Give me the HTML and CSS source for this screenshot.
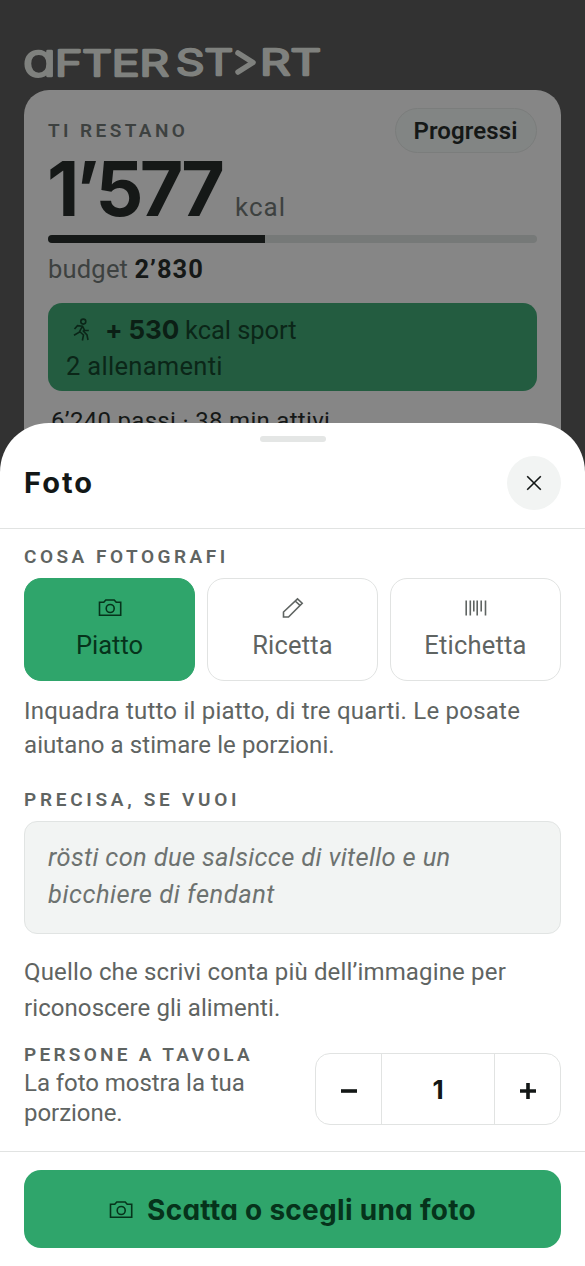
FILE: index.html
```html
<!DOCTYPE html>
<html lang="it">
<head>
<meta charset="utf-8">
<meta name="viewport" content="width=device-width">
<title>After Start</title>
<link rel="stylesheet" href="styles.css">
</head>
<body>
<svg width="0" height="0" class="defs">
  <symbol id="camera" viewBox="0 0 24 18"><path d="M1.5 3.2H5.8L7.8 1H16.2L18.2 3.2H22.7V16.2H1.5Z"/><circle cx="12.2" cy="9.5" r="4"/></symbol>
</svg>
<main class="app">
  <svg class="logo" width="300" height="38" viewBox="0 0 300 38" role="img" aria-label="After Start">
    <text class="logo-a" x="-1" y="31" textLength="33" lengthAdjust="spacingAndGlyphs">a</text>
    <text x="31" y="31" textLength="114" lengthAdjust="spacingAndGlyphs">FTER</text>
    <text x="152" y="30" textLength="57" lengthAdjust="spacingAndGlyphs">ST</text>
    <path d="M214 8L229 17.5L214 27"/>
    <text x="236" y="30" textLength="61" lengthAdjust="spacingAndGlyphs">RT</text>
  </svg>
  <section class="card">
    <div class="card-top">
      <div class="label dim">TI RESTANO</div>
      <button class="pill">Progressi</button>
    </div>
    <div class="total"><strong>1’577</strong><span>kcal</span></div>
    <div class="track"><div class="fill"></div></div>
    <div class="budget"><span>budget</span> <b>2’830</b></div>
    <div class="sport">
      <div class="sport-line">
        <svg width="20" height="24" viewBox="0 0 20 24"><circle cx="11.3" cy="3.6" r="2.5"/><path d="M2.5 11L5.5 7.7L10.5 8.3L12.5 12.2L16.8 12.5M10.2 8.5L7.3 14.1L2 17.3M7.6 13.5L11.5 17L10.4 22.5M10.8 12.5L15 17L16 22"/></svg>
        <b>+ 530</b><span>kcal sport</span>
      </div>
      <div class="workouts">2 allenamenti</div>
    </div>
    <div class="steps">6’240 passi · 38 min attivi</div>
  </section>
</main>
<section class="sheet">
  <header>
    <div class="grip"></div>
    <div class="head-row">
      <h1>Foto</h1>
      <button class="close" aria-label="Chiudi"><svg width="16" height="16" viewBox="0 0 16 16"><path d="M1.2 1.2L14.8 14.8M14.8 1.2L1.2 14.8"/></svg></button>
    </div>
  </header>
  <div class="body">
    <div class="label">COSA FOTOGRAFI</div>
    <div class="modes">
      <button class="mode active"><svg width="24" height="18"><use href="#camera"/></svg><span>Piatto</span></button>
      <button class="mode"><svg width="22" height="22" viewBox="0 0 22 22"><path d="M1.5 20V15L15.5 1.8L20.2 6.2L6.5 20ZM13.2 4L18 8.4"/></svg><span>Ricetta</span></button>
      <button class="mode"><svg width="22" height="18" viewBox="0 0 22 18"><path d="M1.2 1.5V16.5M5.3 1.5V16.5M8.8 1.5V12.5M12.2 1.5V16.5M16.2 1.5V12.5M20.5 1.5V16.5"/></svg><span>Etichetta</span></button>
    </div>
    <p class="hint">Inquadra tutto il piatto, di tre quarti. Le posate<br><span>aiutano a stimare le porzioni.</span></p>
    <div class="label second">PRECISA, SE VUOI</div>
    <div class="note">rösti con due salsicce di vitello e un<br><span>bicchiere di fendant</span></div>
    <p class="hint help">Quello che scrivi conta più dell’immagine per<br><span>riconoscere gli alimenti.</span></p>
    <div class="people">
      <div>
        <div class="label persons">PERSONE A TAVOLA</div>
        <p>La foto mostra la tua<br><span>porzione.</span></p>
      </div>
      <div class="stepper">
        <button aria-label="Meno"><svg width="18" height="18" viewBox="0 0 18 18"><path d="M1 9H17"/></svg></button>
        <output>1</output>
        <button aria-label="Più"><svg width="18" height="18" viewBox="0 0 18 18"><path d="M1 9H17M9 1V17"/></svg></button>
      </div>
    </div>
  </div>
  <footer><button class="cta"><svg width="24" height="18"><use href="#camera"/></svg><span>Scatta o scegli una foto</span></button></footer>
</section>
</body>
</html>
```
FILE: styles.css
```css
* { box-sizing: border-box; }
body { margin: 0; width: 585px; height: 1266px; overflow: hidden; position: relative; background: #323232; font-family: Roboto, "Liberation Sans", sans-serif; color: #131716; }
button { font: inherit; color: inherit; margin: 0; padding: 0; border: 0; background: none; }
p, h1 { margin: 0; font-weight: 400; }
svg { display: block; flex: none; fill: none; stroke: currentColor; stroke-width: 1.6; }
.defs { position: absolute; }
.app { padding: 45px 24px 0; }
.logo { stroke: #7f817e; stroke-width: 5.5; stroke-linecap: round; stroke-linejoin: round; overflow: visible; }
.logo text { font: 300 35px Inter, sans-serif; fill: #7f817e; stroke-width: 2.6; }
.logo .logo-a { font-size: 46px; font-feature-settings: "cv11"; }
.card { margin-top: 7px; height: 420px; padding: 18px 24px; background: #868686; border-radius: 25px; color: #151817; }
.card-top { display: flex; justify-content: space-between; height: 45px; }
.label { font-weight: 600; font-size: 19px; line-height: 26px; height: 24px; letter-spacing: 3.5px; color: #5f6462; white-space: nowrap; }
.dim { letter-spacing: 3.4px; color: #3d4140; padding-top: 10px; }
.pill { width: 142px; height: 45px; border: 1px solid #7b7d7c; border-radius: 23px; background: #828584; font-weight: 600; font-size: 24px; letter-spacing: .1px; padding: 1px 1px 0 0; }
.total { display: flex; align-items: baseline; height: 82px; line-height: 74px; white-space: nowrap; }
.total strong { width: 187px; margin-top: -1px; font: 700 75px/74px Inter, sans-serif; letter-spacing: -3.6px; text-indent: -1px; }
.total span { font-size: 26px; letter-spacing: 1px; color: #3d4140; }
.track { height: 8px; border-radius: 4px; background: #767978; overflow: hidden; }
.fill { width: 217px; height: 8px; background: #151817; }
.budget { margin-top: 10px; height: 50px; line-height: 32px; font-size: 25.5px; white-space: nowrap; }
.budget span { color: #3d4140; letter-spacing: .2px; }
.budget b { letter-spacing: 1px; }
.sport { height: 88px; padding: 9px 18px; border-radius: 14px; background: #235c40; color: #0b2618; font-size: 25.5px; line-height: 36px; }
.sport-line { display: flex; align-items: center; height: 36px; padding-left: 6px; white-space: nowrap; }
.sport-line b { width: 80px; margin-left: 13px; font: 700 26px/36px Inter, sans-serif; letter-spacing: -.1px; color: #0b1f15; }
.sport-line span { letter-spacing: -.05px; }
.workouts { letter-spacing: .3px; }
.steps { margin: 12px 0 0 3px; line-height: 36px; font-size: 24px; letter-spacing: .3px; }
.sheet { position: absolute; inset: 423px 0 0; background: #fff; border-radius: 49px 49px 0 0; }
header { height: 106px; padding: 13px 24px 0; border-bottom: 1.5px solid #e1e3e2; }
.grip { width: 66px; height: 6px; margin: 0 auto; border-radius: 3px; background: #e4e6e5; }
.head-row { display: flex; justify-content: space-between; align-items: center; height: 54px; margin-top: 14px; }
h1 { font: 700 29px/40px Inter, sans-serif; letter-spacing: 2px; }
.close { display: grid; place-items: center; width: 54px; height: 54px; border-radius: 50%; background: #f2f4f3; }
.body { height: 622px; padding: 15px 24px 0; }
.modes { display: grid; grid-template-columns: repeat(3, 1fr); gap: 12px; margin-top: 10px; }
.mode { height: 103px; display: grid; grid-template-rows: 22px 34px; gap: 9px; align-content: start; justify-items: center; align-items: center; padding-top: 18px; border: 1.5px solid #e1e3e2; border-radius: 17px; color: #5f6462; font-size: 25.5px; line-height: 34px; letter-spacing: .2px; }
.active { background: #2fa56b; border-color: #2fa56b; color: #06331b; letter-spacing: 0; }
.hint { margin-top: 13px; color: #5f6462; font-size: 24px; line-height: 34px; letter-spacing: .22px; white-space: nowrap; }
.hint span { letter-spacing: .08px; }
.second { margin-top: 25px; letter-spacing: 3.72px; }
.note { margin-top: 10px; height: 113px; padding: 17px 23px; border: 1.5px solid #e1e4e3; border-radius: 13px; background: #f2f4f3; color: #6d7270; font-style: italic; font-size: 25.5px; line-height: 37px; letter-spacing: .33px; white-space: nowrap; }
.note span { letter-spacing: .52px; }
.help { margin-top: 20px; line-height: 36px; letter-spacing: .16px; }
.people { display: flex; justify-content: space-between; margin-top: 16px; color: #5f6462; font-size: 24px; line-height: 30px; }
.people p { white-space: nowrap; margin-top: 2px; letter-spacing: -.05px; }
.persons { letter-spacing: 3.27px; }
.stepper { display: grid; grid-template-columns: 65px 114px 1fr; width: 246px; height: 72px; margin-top: 11px; border: 1.5px solid #e1e3e2; border-radius: 15px; color: #131716; }
.stepper svg { stroke-width: 3.6; margin-top: 4px; }
.stepper button, .stepper output { display: grid; place-items: center; }
.stepper output { border: solid #e1e3e2; border-width: 0 1.5px; font: 700 26px Inter, sans-serif; }
footer { border-top: 1.5px solid #e1e3e2; padding: 18px 24px 0; }
.cta { display: flex; align-items: center; justify-content: center; gap: 14px; width: 100%; height: 78px; padding-top: 2px; border-radius: 17px; background: #2fa56b; color: #06331b; font: 650 28px Inter, sans-serif; font-feature-settings: "cv11"; letter-spacing: .28px; white-space: nowrap; }
```
